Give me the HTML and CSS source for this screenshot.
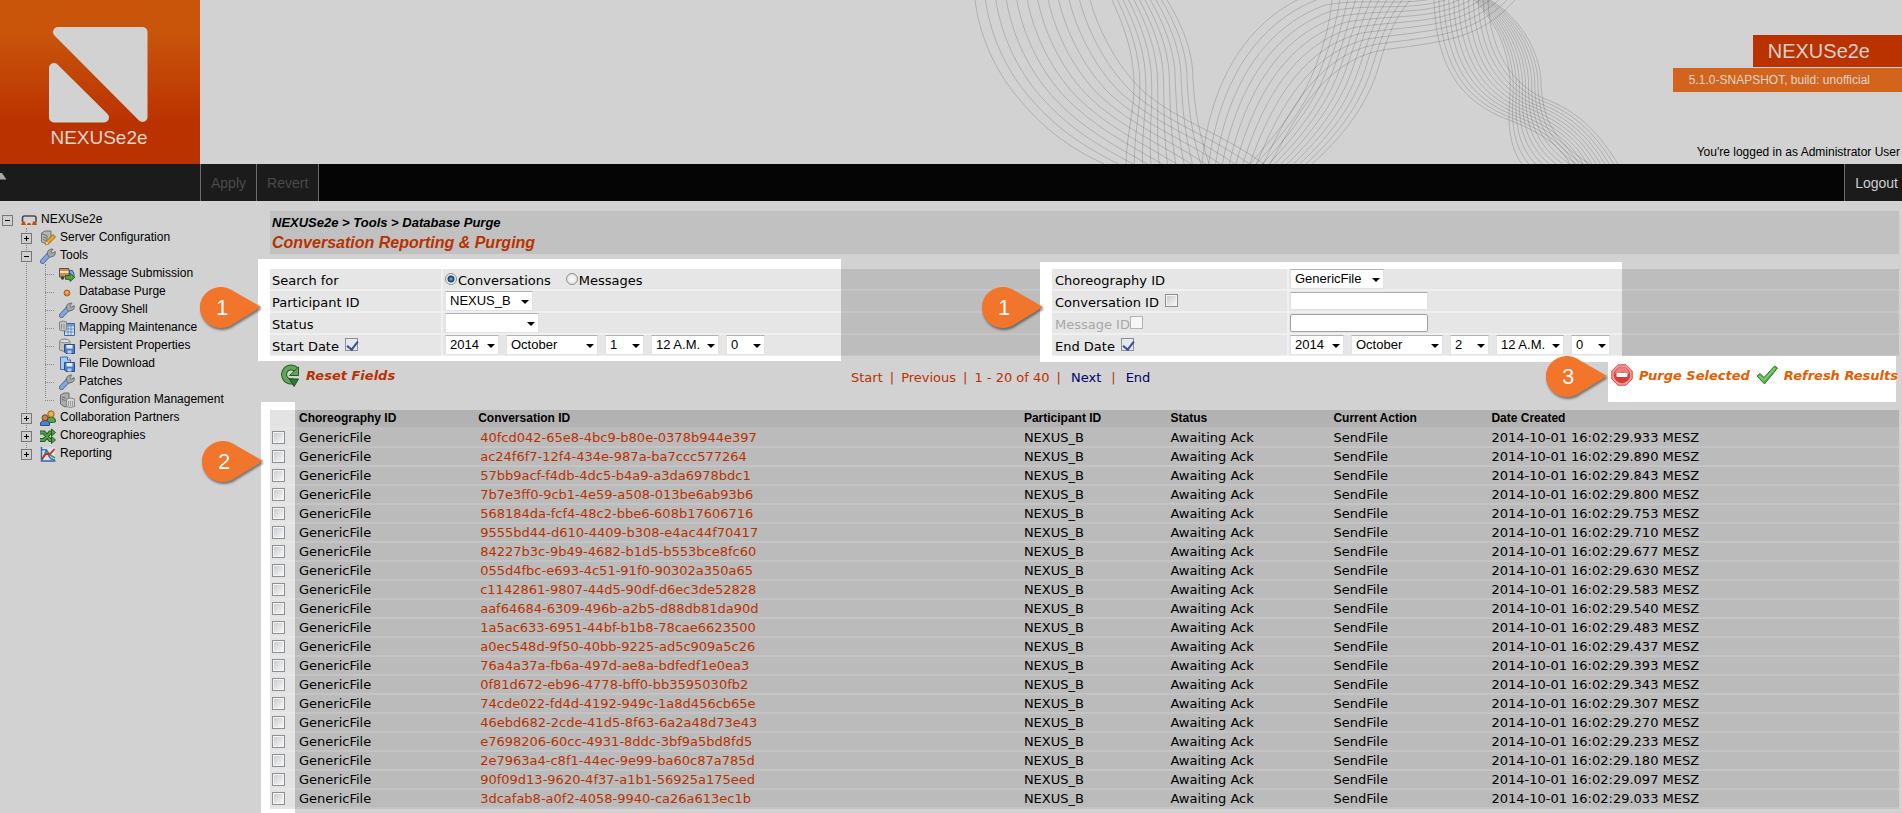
FILE: index.html
```html
<!DOCTYPE html>
<html lang="en">
<head>
<meta charset="utf-8">
<title>NEXUSe2e - Database Purge</title>
<link rel="stylesheet" href="styles.css">
</head>
<body>
<svg class="sprite" aria-hidden="true">
  <symbol id="i-nexus" viewBox="0 0 16 16"><path d="M1.500 10V6Q1.500 4 3.500 4H13Q15 4 15 6V10" fill="none" stroke="#4e4a48" stroke-width="1.600"/><path d="M0 13 1.500 9.500H3.500L5 13ZM5.500 13 7 11H9L10.500 13ZM11 13 12 9.500H15L16 13Z" fill="#c2500a"/></symbol>
  <symbol id="i-server" viewBox="0 0 16 16"><path d="M1.500 3 5 1H11V11L8 14.500 1.500 12Z" fill="#b4b6b4" stroke="#6f7270"/><path d="M2 4 7 5.500V14M3 7 6 8M3 9.500 6 10.500" fill="none" stroke="#6f7270"/><path d="M5.500 15 6.500 11 13 4.500 15.500 7 9 13.500Z" fill="#e5a52e" stroke="#a06a12"/><path d="M5.500 15 6.500 11.500 8.500 13.500Z" fill="#f0dcb0"/></symbol>
  <symbol id="i-wrench" viewBox="0 0 16 16"><path d="M2.500 13.500 8.500 7" stroke="#4d6a9c" stroke-width="5" stroke-linecap="round"/><path d="M2.500 13.500 8 7.500" stroke="#86a4d8" stroke-width="3.400" stroke-linecap="round"/><path d="M7.500 6.500Q6.500 2 11.500 1L13 1.200 11 3.800 12.300 5.200 15.200 3.500Q16 8.500 11 8.800L9.500 9.500Z" fill="#a3a7a9" stroke="#64686b" stroke-width=".9"/></symbol>
  <symbol id="i-truck" viewBox="0 0 16 16"><path d="M.5 2.500H10V11H.5Z" fill="#d28b43" stroke="#5b554d"/><path d="M1 5H9.500V7H1Z" fill="#efe1c8"/><path d="M10.500 4.500H13.500L15 8V11H10.500Z" fill="#82a9db" stroke="#34588c"/><circle cx="3.500" cy="12" r="1.700" fill="#3c3c3c"/><path d="M6.500 9.500H11V7L15.700 11.500 11 15.500V13.300H6.500Z" fill="#53a144" stroke="#24641f"/></symbol>
  <symbol id="i-dot" viewBox="0 0 16 16"><circle cx="8" cy="9" r="3" fill="#d98436" stroke="#b7631b"/><circle cx="8" cy="8.500" r="1.200" fill="#eebc82"/></symbol>
  <symbol id="i-map" viewBox="0 0 16 16"><path d="M5.500 3.500H15.500V15.500H5.500Z" fill="#dbe6f5" stroke="#3b68a6"/><path d="M6 4H15V6.500H6Z" fill="#6d9bd6"/><path d="M6 9H15M6 12H15M9 6V15M12 6V15" stroke="#5a86c2" stroke-width=".9"/><path d="M.5 2Q4 0 7.500 2V10Q4 12 .5 10Z" fill="#c3c5c5" stroke="#858888"/><path d="M2.500 4V9M5 4V9" stroke="#8d9090"/></symbol>
  <symbol id="i-disk" viewBox="0 0 16 16"><path d="M5.500 6.500H15.500V15.500H7L5.500 14Z" fill="#4a7cc4" stroke="#25518f"/><path d="M7.500 7H13.500V10.500H7.500Z" fill="#e6edf6"/><path d="M8.500 12.500H12.500V15.500H8.500Z" fill="#bccbe0"/></symbol>
  <symbol id="i-props" viewBox="0 0 16 16"><path d="M.5 3Q5 -1 11 3V12Q5 15 .5 12Z" fill="#bfc1c1" stroke="#868989"/><ellipse cx="5.700" cy="3" rx="5" ry="1.800" fill="#dadbdb" stroke="#8b8e8e"/><use href="#i-disk"/></symbol>
  <symbol id="i-file" viewBox="0 0 16 16"><path d="M1.500 1H8.500L11.500 4V13.500H1.500Z" fill="#a9c8ee" stroke="#3d70b5"/><path d="M8.500 1V4H11.500" fill="#dfeafa" stroke="#3d70b5"/><use href="#i-disk"/></symbol>
  <symbol id="i-config" viewBox="0 0 16 16"><path d="M1.500 3 5 1H10V14L6 15 1.500 12Z" fill="#a9acaa" stroke="#6b6e6c"/><path d="M3 5 6.500 6M3 7.500 6.500 8.500" stroke="#686b69"/><path d="M7.500 7Q11 5 15.500 7V14.500Q11 16.500 7.500 14.500Z" fill="#d3d4d4" stroke="#858888"/><path d="M9.500 9V14M11.500 9V14M13.500 9V14" stroke="#999c9c"/></symbol>
  <symbol id="i-people" viewBox="0 0 16 16"><path d="M7 13V10Q7 7 11 7T15.500 10V12Z" fill="#5da24a" stroke="#2f6b26"/><circle cx="11" cy="4" r="3.200" fill="#e9b04c" stroke="#9c661a"/><path d="M.5 15.500V13Q1 10.500 5 10.500T9.500 13V15.500Z" fill="#4d82cc" stroke="#274f8d"/><circle cx="5" cy="7.800" r="3" fill="#c68351" stroke="#7a4119"/></symbol>
  <symbol id="i-choreo" viewBox="0 0 16 16"><path d="M0 4.500H4L10 12H13M0 12H4L10 4.500H13" fill="none" stroke="#255e24" stroke-width="4"/><path d="M0 4.500H4L10 12H13M0 12H4L10 4.500H13" fill="none" stroke="#54a04a" stroke-width="2"/><path d="M11.500 1 15.500 4.500 11.500 8ZM11.500 8.500 15.500 12 11.500 15.500Z" fill="#54a04a" stroke="#255e24"/></symbol>
  <symbol id="i-report" viewBox="0 0 16 16"><path d="M2 1.500H15V14H2Z" fill="#dfe2ea"/><path d="M1.500 1V15H15.500" fill="none" stroke="#3267ad" stroke-width="1.500"/><path d="M2 14 6.500 4 10 9 15 12" fill="none" stroke="#38935c" stroke-width="1.600"/><path d="M2 4Q6 2 8 8T15 14" fill="none" stroke="#4373c0" stroke-width="1.600"/><path d="M2 13 6 8 10 8 14.500 3" fill="none" stroke="#cf2b22" stroke-width="1.800"/></symbol>
  <symbol id="i-pin" viewBox="0 0 64 46"><path d="M61 20 34 36.500A21 20.500 0 1 1 34 4.500Z" fill="#f1762b"/></symbol>
</svg>

<header class="header">
  <svg id="waves" class="waves" width="720" height="164" viewBox="930 0 720 164" aria-hidden="true"></svg>
  <div class="logo">
    <svg class="logo-mark" viewBox="0 0 100 98" aria-hidden="true"><g fill="#d2d2d2" stroke="#d2d2d2" stroke-width="10" stroke-linejoin="round"><path d="M9 6H93.500V91Z"/><path d="M5 42 55 91.500H5Z"/></g></svg>
    <span class="logo-text">NEXUSe2e</span>
  </div>
  <div class="header-info">
    <div class="product">NEXUSe2e</div>
    <div class="version">5.1.0-SNAPSHOT, build: unofficial</div>
    <div class="user">You're logged in as Administrator User</div>
  </div>
</header>

<nav class="toolbar">
  <div class="toolbar-start"><svg width="7" height="7" viewBox="0 0 7 7" aria-hidden="true"><path d="M0 0H2L6.500 6.500H0Z" fill="#a8a8a8"/></svg></div>
  <button class="tool" disabled>Apply</button>
  <button class="tool" disabled>Revert</button>
  <span class="toolbar-fill"></span>
  <button class="tool logout">Logout</button>
</nav>

<div class="page">
  <nav class="tree">
    <div class="node"><button class="toggle open" aria-label="Collapse NEXUSe2e"></button><svg class="icon"><use href="#i-nexus"/></svg><a href="#">NEXUSe2e</a></div>
    <ul class="level1">
      <li><div class="node"><button class="toggle" aria-label="Expand Server Configuration"></button><svg class="icon"><use href="#i-server"/></svg><a href="#">Server Configuration</a></div></li>
      <li><div class="node"><button class="toggle open" aria-label="Collapse Tools"></button><svg class="icon"><use href="#i-wrench"/></svg><a href="#">Tools</a></div>
        <ul class="level2">
          <li class="node"><svg class="icon"><use href="#i-truck"/></svg><a href="#">Message Submission</a></li>
          <li class="node"><svg class="icon"><use href="#i-dot"/></svg><a href="#">Database Purge</a></li>
          <li class="node"><svg class="icon"><use href="#i-wrench"/></svg><a href="#">Groovy Shell</a></li>
          <li class="node"><svg class="icon"><use href="#i-map"/></svg><a href="#">Mapping Maintenance</a></li>
          <li class="node"><svg class="icon"><use href="#i-props"/></svg><a href="#">Persistent Properties</a></li>
          <li class="node"><svg class="icon"><use href="#i-file"/></svg><a href="#">File Download</a></li>
          <li class="node"><svg class="icon"><use href="#i-wrench"/></svg><a href="#">Patches</a></li>
          <li class="node"><svg class="icon"><use href="#i-config"/></svg><a href="#">Configuration Management</a></li>
        </ul>
      </li>
      <li><div class="node"><button class="toggle" aria-label="Expand Collaboration Partners"></button><svg class="icon"><use href="#i-people"/></svg><a href="#">Collaboration Partners</a></div></li>
      <li><div class="node"><button class="toggle" aria-label="Expand Choreographies"></button><svg class="icon"><use href="#i-choreo"/></svg><a href="#">Choreographies</a></div></li>
      <li><div class="node"><button class="toggle" aria-label="Expand Reporting"></button><svg class="icon"><use href="#i-report"/></svg><a href="#">Reporting</a></div></li>
    </ul>
  </nav>

  <main class="content">
    <div class="title-box">
      <div class="crumbs">NEXUSe2e &gt; Tools &gt; Database Purge</div>
      <h1 class="title">Conversation Reporting &amp; Purging</h1>
    </div>

    <form class="search">
      <div class="half half-start">
        <div class="spot"></div>
        <svg class="pin" viewBox="0 0 64 46"><use href="#i-pin"/><text x="22" y="28">1</text></svg>
        <div class="cell">Search for</div>
        <div class="cell field"><label class="choice"><input class="radio" type="radio" name="kind" checked>Conversations</label><label class="choice"><input class="radio" type="radio" name="kind">Messages</label></div>
        <label class="cell" for="participant">Participant ID</label>
        <div class="cell field"><span class="select w-88"><select id="participant"><option>NEXUS_B</option></select></span></div>
        <label class="cell" for="status">Status</label>
        <div class="cell field"><span class="select w-94"><select id="status"><option></option></select></span></div>
        <label class="cell">Start Date <input class="check" type="checkbox" checked></label>
        <div class="cell field">
          <span class="select w-54"><select aria-label="Start year"><option>2014</option></select></span>
          <span class="select w-92"><select aria-label="Start month"><option>October</option></select></span>
          <span class="select w-40"><select aria-label="Start day"><option>1</option></select></span>
          <span class="select w-68"><select aria-label="Start hour"><option>12 A.M.</option></select></span>
          <span class="select w-40"><select aria-label="Start minute"><option>0</option></select></span>
        </div>
      </div>
      <div class="half half-end">
        <div class="spot"></div>
        <svg class="pin" viewBox="0 0 64 46"><use href="#i-pin"/><text x="22" y="28">1</text></svg>
        <label class="cell" for="choreography">Choreography ID</label>
        <div class="cell field"><span class="select w-94"><select id="choreography"><option>GenericFile</option></select></span></div>
        <label class="cell">Conversation ID <input class="check" type="checkbox"></label>
        <div class="cell field"><input class="text" type="text" aria-label="Conversation ID"></div>
        <label class="cell off">Message ID<input class="check" type="checkbox" disabled></label>
        <div class="cell field"><input class="text framed" type="text" aria-label="Message ID"></div>
        <label class="cell">End Date <input class="check" type="checkbox" checked></label>
        <div class="cell field">
          <span class="select w-54"><select aria-label="End year"><option>2014</option></select></span>
          <span class="select w-92"><select aria-label="End month"><option>October</option></select></span>
          <span class="select w-40"><select aria-label="End day"><option>2</option></select></span>
          <span class="select w-68"><select aria-label="End hour"><option>12 A.M.</option></select></span>
          <span class="select w-40"><select aria-label="End minute"><option>0</option></select></span>
        </div>
      </div>
    </form>

    <div class="actions">
      <a class="action reset" href="#"><svg width="20" height="24" viewBox="0 0 20 24" aria-hidden="true"><path d="M16 6.500A7 7 0 1 0 11 18.500H14" fill="none" stroke="#245c26" stroke-width="6"/><path d="M16 6.500A7 7 0 1 0 11 18.500H14" fill="none" stroke="#62a65c" stroke-width="4"/><path d="M18.500 4V12.500H9.500Z" fill="#62a65c" stroke="#245c26"/><path d="M9.500 16H18.500L14 23.500Z" fill="#2f7a31" stroke="#1c4f1e"/></svg>Reset Fields</a>
      <div class="pager"><span>Start</span><span>|</span><span>Previous</span><span>|</span><span>1 - 20 of 40</span><span>|</span><a href="#">Next</a><span>|</span><a href="#">End</a></div>
      <div class="bulk">
        <svg class="pin" viewBox="0 0 64 46"><use href="#i-pin"/><text x="22" y="28">3</text></svg>
        <a class="action" href="#"><svg width="22" height="22" viewBox="0 0 22 22" aria-hidden="true"><path d="M7 .8H15L21.200 7V15L15 21.200H7L.8 15V7Z" fill="#f0a09b" stroke="#cf4b45"/><circle cx="11" cy="11" r="8.200" fill="#d93a36"/><path d="M4 10A7 7 0 0 1 18 10Q11 7 4 10Z" fill="#ea807b"/><rect x="5.500" y="9" width="11" height="4" rx="1" fill="#fff"/></svg>Purge Selected</a>
        <a class="action" href="#"><svg width="22" height="20" viewBox="0 0 22 20" aria-hidden="true"><path d="M1 11 4 8.500 8 12.500 18.500 1 21.500 3 8.500 19Z" fill="#5cb04b" stroke="#31752b" stroke-linejoin="round"/><path d="M3 11 8 15 19 3" fill="none" stroke="#8fd07e" stroke-width="1.200"/></svg>Refresh Results</a>
      </div>
    </div>

    <div class="results">
      <div class="spot"></div>
      <svg class="pin" viewBox="0 0 64 46"><use href="#i-pin"/><text x="22" y="28">2</text></svg>
      <table class="grid">
        <colgroup><col class="c-check"><col class="c-choreo"><col class="c-conv"><col class="c-part"><col class="c-status"><col class="c-action"><col></colgroup>
        <thead><tr><th></th><th>Choreography ID</th><th>Conversation ID</th><th>Participant ID</th><th>Status</th><th>Current Action</th><th>Date Created</th></tr></thead>
        <tbody id="rows"></tbody>
      </table>
    </div>
  </main>
</div>
<script src="app.js"></script>
</body>
</html>
```

FILE: styles.css
```css
* { box-sizing: border-box; }
body {
  margin: 0;
  background: #d2d2d2;
  color: #000;
  font: 13px/17px Verdana, "DejaVu Sans", sans-serif;
}
a { color: inherit; text-decoration: none; }
button, select, input { font-family: Arial, "Liberation Sans", sans-serif; margin: 0; }
.sprite { position: absolute; width: 0; height: 0; }

/* header */
.header {
  position: relative;
  display: flex;
  justify-content: space-between;
  height: 164px;
  overflow: hidden;
  font-family: Arial, "Liberation Sans", sans-serif;
}
.waves { position: absolute; top: 0; right: 252px; fill: none; stroke: #000; stroke-opacity: .16; stroke-width: 1; }
.logo {
  display: flex;
  flex-direction: column;
  align-items: center;
  width: 200px;
  padding: 26px 2px 0 0;
  background: linear-gradient(#c9550b 0, #c9550b 20%, #ba3200 75%);
}
.logo-mark { width: 100px; height: 98px; }
.logo-text { margin-top: 2px; color: #dcd5d0; font-size: 19px; line-height: 24px; }
.header-info {
  position: relative;
  display: flex;
  flex-direction: column;
  align-items: flex-end;
  padding-top: 35px;
}
.product { padding: 0 32px 0 15px; background: #ba3200; color: #d8d0cc; font-size: 20px; line-height: 32px; }
.version { margin-top: 1px; padding: 0 32px 0 16px; background: #d3641e; color: #e0d4cb; font-size: 12px; line-height: 24px; }
.user { margin-top: 51px; padding-right: 2px; font-size: 12px; line-height: 18px; }

/* toolbar */
.toolbar { display: flex; height: 37px; background: #050505; }
.toolbar-start { width: 200px; padding-top: 9px; background: #1b1b1b; }
.toolbar-start svg { display: block; }
.toolbar-fill { flex: 1; border-left: 1px solid #6c6c6c; }
.tool {
  padding: 0 10px;
  border: 0;
  border-left: 1px solid #6c6c6c;
  background: #1b1b1b;
  color: #4a4a4a;
  font-size: 14px;
}
.logout { padding: 0 4px 0 10px; color: #d0d0d0; }

.page { display: flex; }

/* navigation tree */
.tree {
  flex: 0 0 270px;
  padding: 9px 0 0 2px;
  font: 12px/18px Arial, "Liberation Sans", sans-serif;
}
.tree ul { margin: 0; padding: 0 0 0 19px; list-style: none; position: relative; }
.node { display: flex; height: 18px; white-space: nowrap; }
.icon { width: 16px; height: 16px; margin: 2px 4px 0 8px; }
.toggle {
  position: relative;
  z-index: 1;
  width: 11px;
  height: 11px;
  margin-top: 5px;
  padding: 0;
  border: 1px solid #777;
  background: linear-gradient(#000, #000) center / 5px 1px no-repeat, linear-gradient(#000, #000) center / 1px 5px no-repeat, #cfcfcf;
}
.toggle.open { background: linear-gradient(#000, #000) center / 5px 1px no-repeat, #cfcfcf; }
.level1::before, .level2::before {
  content: "";
  position: absolute;
  left: 24px;
  top: 0;
  bottom: 10px;
  border-left: 1px dotted #888;
}
.level2 .node { position: relative; padding-left: 11px; }
.level2 .node::before {
  content: "";
  position: absolute;
  left: 5px;
  top: 10px;
  width: 9px;
  border-top: 1px dotted #888;
}

/* content */
.content { flex: 1; min-width: 0; padding: 10px 3px 5px 0; }
.title-box {
  padding: 2px 2px 1px;
  background: #c1c1c1;
  font-family: Arial, "Liberation Sans", sans-serif;
  font-style: italic;
  font-weight: bold;
  line-height: 20px;
}
.title { margin: 0; color: #b83200; font-size: 16px; }

/* lit areas and numbered pins */
.spot { position: absolute; z-index: -2; background: #fff; }
.pin {
  position: absolute;
  z-index: 2;
  width: 64px;
  height: 46px;
  filter: drop-shadow(1px 2px 1px rgba(0, 0, 0, .45));
  fill: #fff;
  font: 22px Arial, "Liberation Sans", sans-serif;
  text-anchor: middle;
}

/* search form */
.search { display: grid; grid-template-columns: 780fr 847fr; gap: 2px; margin-top: 15px; }
.half {
  position: relative;
  z-index: 0;
  display: grid;
  grid-template-columns: 171px 1fr;
  grid-auto-rows: 20px;
  gap: 2px;
  padding-bottom: 1px;
}
.half-end { grid-template-columns: 235px 1fr; z-index: 1; }
.half::before { content: ""; position: absolute; inset: 0; z-index: -1; background: rgba(0, 0, 0, .06); }
.half-start .spot { left: -12px; width: 583px; top: -10px; bottom: -5px; }
.half-end .spot { left: -12px; width: 582px; top: -7px; bottom: -6px; }
.half .pin { left: -70px; top: 18px; }
.cell {
  display: flex;
  align-items: center;
  gap: 2px;
  padding: 2px 2px 0;
  background: rgba(0, 0, 0, .04);
  white-space: pre;
}
.half-end .cell { padding-left: 3px; }
.field { gap: 7px; padding-top: 0; white-space: normal; }
.half-end .field { padding-left: 1px; }
.half-end .off { gap: 0; color: #a8a8a8; }
.choice { display: flex; align-items: center; gap: 1px; padding-top: 2px; margin-right: 8px; }
.radio {
  appearance: none;
  width: 12px;
  height: 12px;
  margin-top: -3px;
  border: 1px solid #8c8f92;
  border-radius: 50%;
  background: radial-gradient(#fff, #d4d6d8);
}
.radio:checked { background: radial-gradient(circle, #5fc0ea 0, #123a5c 3px, #e8eef2 4px); }
.check {
  appearance: none;
  width: 13px;
  height: 13px;
  margin-top: -4px;
  border: 1px solid #8e8f8f;
  background: linear-gradient(135deg, #c9ccd2, #f6f6f6) content-box, #f4f4f4;
  padding: 1px;
}
.check:disabled { border-color: #b4b4b4; background: #f6f6f6; }
.check:checked { position: relative; background: #e4e8f0; }
.check:checked::after {
  content: "";
  position: absolute;
  left: 3px;
  top: 0;
  width: 5px;
  height: 9px;
  border: solid #364f96;
  border-width: 0 2px 2px 0;
  transform: rotate(38deg);
}
.select { position: relative; height: 20px; }
.select::after {
  content: "";
  position: absolute;
  right: 4px;
  top: 9px;
  border: solid transparent;
  border-width: 4px 4px 0;
  border-top-color: #000;
  pointer-events: none;
}
.select select {
  appearance: none;
  width: 100%;
  height: 100%;
  padding: 0 0 1px 4px;
  border: 1px solid #e0e2e6;
  border-top-color: #b0b2b8;
  border-radius: 0;
  background: #fff;
  color: #000;
  font-size: 13px;
}
.w-40 { width: 39px; }
.w-54 { width: 54px; }
.w-68 { width: 68px; }
.w-88 { width: 88px; }
.w-92 { width: 92px; }
.w-94 { width: 94px; }
.text { width: 138px; height: 18px; border: 1px solid #e0e2e6; border-top-color: #abadb3; background: #fff; }
.framed { border-color: #9fa1a4; border-radius: 2px; }

/* actions */
.actions { display: grid; grid-template-columns: 581fr 757fr auto; align-items: start; height: 54px; }
.action {
  display: flex;
  align-items: center;
  gap: 6px;
  font-style: italic;
  font-weight: bold;
  white-space: nowrap;
}
.reset { padding: 7px 0 0 10px; color: #b83200; }
.pager { display: flex; gap: 7px; padding-top: 13px; color: #b83200; }
.pager a { color: #000066; margin: 0 3px; }
.bulk {
  position: relative;
  display: flex;
  gap: 6px;
  height: 46px;
  margin-right: 3px;
  padding: 0 0 8px 3px;
  background: #fff;
  color: #e45e00;
}
.bulk .action:last-child { margin-right: -2px; }
.bulk .pin { left: -62px; top: 0; }

/* results */
.results { position: relative; z-index: 0; }
.results .spot { left: -9px; width: 34px; top: -8px; bottom: -5px; }
.results .pin { left: -68px; top: 31px; }
.grid { width: 100%; table-layout: fixed; border-spacing: 0; }
.c-check { width: 27px; }
.c-choreo { width: 11%; }
.c-conv { width: 33.5%; }
.c-part { width: 9%; }
.c-status { width: 10%; }
.c-action { width: 9.7%; }
.grid th, .grid td {
  height: 19px;
  padding: 0 2px;
  border-bottom: 2px solid rgba(255, 255, 255, .14);
  background: rgba(0, 0, 0, .11);
  text-align: left;
  white-space: nowrap;
}
.grid th {
  background: rgba(0, 0, 0, .15);
  font: bold 12px/17px Arial, "Liberation Sans", sans-serif;
}
.grid th:first-child { background: rgba(0, 0, 0, .11); }
.grid td:nth-child(3) { padding-left: 4px; color: #b83200; }
.grid .check { display: block; margin: 0; }
```

FILE: app.js
```js
// Each band is a family of curves blended between two edge curves.
const bands = [
  [12, [975,0, 980,40, 998,75, 1020,100, 1045,130, 1070,148, 1104,164], [1090,0, 1100,35, 1120,70, 1145,93, 1180,122, 1225,135, 1264,164]],
  [11, [1112,0, 1125,28, 1134,55, 1134,85, 1134,115, 1127,130, 1126,164], [1167,0, 1182,25, 1193,50, 1193,80, 1195,115, 1200,135, 1209,164]],
  [11, [1202,164, 1208,100, 1235,25, 1310,-6, 1360,-16, 1400,5, 1450,-15], [1270,164, 1290,130, 1320,60, 1383,50, 1440,42, 1480,40, 1515,0]],
  [11, [1332,0, 1330,20, 1326,40, 1316,65, 1304,98, 1282,128, 1250,164], [1410,0, 1395,18, 1388,35, 1380,62, 1370,98, 1350,130, 1312,164]],
  [12, [1434,0, 1436,60, 1455,100, 1509,120, 1540,132, 1560,145, 1570,164], [1488,0, 1490,60, 1520,90, 1550,101, 1580,113, 1600,135, 1618,164]],
  [11, [1474,0, 1500,25, 1512,60, 1510,95, 1508,120, 1508,145, 1522,164], [1490,0, 1525,20, 1542,60, 1541,85, 1543,115, 1550,140, 1590,164]]
];
const waves = document.getElementById("waves");
for (const [count, from, to] of bands) {
  for (let i = 0; i < count; i++) {
    const t = i / (count - 1);
    const p = from.map((v, k) => (v + (to[k] - v) * t).toFixed(1));
    const path = document.createElementNS("http://www.w3.org/2000/svg", "path");
    path.setAttribute("d", `M${p.slice(0, 2)}C${p.slice(2)}`);
    waves.appendChild(path);
  }
}

const conversations = [
  ["40fcd042-65e8-4bc9-b80e-0378b944e397", "933"],
  ["ac24f6f7-12f4-434e-987a-ba7ccc577264", "890"],
  ["57bb9acf-f4db-4dc5-b4a9-a3da6978bdc1", "843"],
  ["7b7e3ff0-9cb1-4e59-a508-013be6ab93b6", "800"],
  ["568184da-fcf4-48c2-bbe6-608b17606716", "753"],
  ["9555bd44-d610-4409-b308-e4ac44f70417", "710"],
  ["84227b3c-9b49-4682-b1d5-b553bce8fc60", "677"],
  ["055d4fbc-e693-4c51-91f0-90302a350a65", "630"],
  ["c1142861-9807-44d5-90df-d6ec3de52828", "583"],
  ["aaf64684-6309-496b-a2b5-d88db81da90d", "540"],
  ["1a5ac633-6951-44bf-b1b8-78cae6623500", "483"],
  ["a0ec548d-9f50-40bb-9225-ad5c909a5c26", "437"],
  ["76a4a37a-fb6a-497d-ae8a-bdfedf1e0ea3", "393"],
  ["0f81d672-eb96-4778-bff0-bb3595030fb2", "343"],
  ["74cde022-fd4d-4192-949c-1a8d456cb65e", "307"],
  ["46ebd682-2cde-41d5-8f63-6a2a48d73e43", "270"],
  ["e7698206-60cc-4931-8ddc-3bf9a5bd8fd5", "233"],
  ["2e7963a4-c8f1-44ec-9e99-ba60c87a785d", "180"],
  ["90f09d13-9620-4f37-a1b1-56925a175eed", "097"],
  ["3dcafab8-a0f2-4058-9940-ca26a613ec1b", "033"]
];
document.getElementById("rows").innerHTML = conversations.map(([id, ms]) =>
  `<tr><td><input class="check" type="checkbox" aria-label="Select ${id}"></td><td>GenericFile</td><td><a href="#">${id}</a></td><td>NEXUS_B</td><td>Awaiting Ack</td><td>SendFile</td><td>2014-10-01 16:02:29.${ms} MESZ</td></tr>`
).join("");
```
